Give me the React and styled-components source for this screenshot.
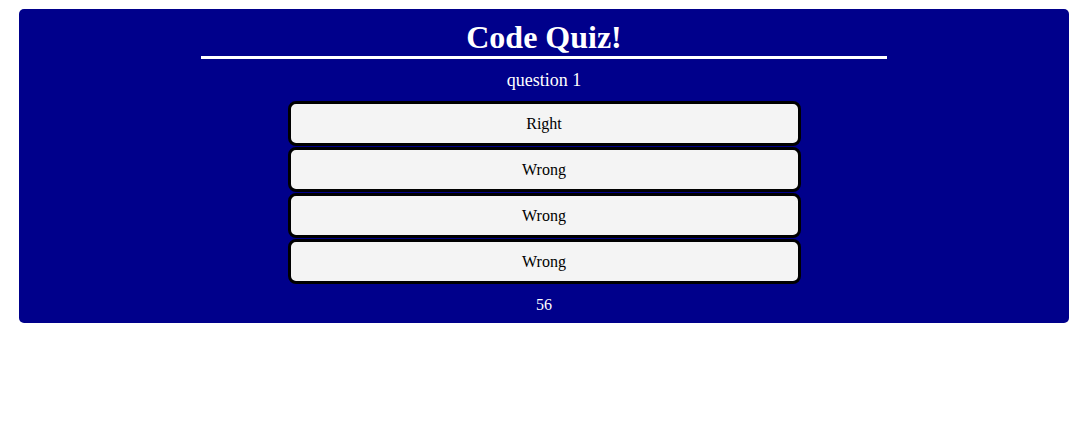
import styled, { createGlobalStyle } from "styled-components";

const GlobalStyle = createGlobalStyle`
  body {
    margin: 0;
    background: #fff;
    font-family: "Liberation Serif", "Times New Roman", serif;
  }
`;

const Card = styled.main`
  margin: 9px 22px 0 19px;
  padding: 10px 0 9px;
  background-color: #00008b;
  border-radius: 5px;
  display: flex;
  flex-direction: column;
  align-items: center;
  color: #fff;
`;

const Title = styled.h1`
  width: 686px;
  margin: 0;
  font-size: 32px;
  font-weight: bold;
  text-align: center;
  border-bottom: 3px solid #fff;
`;

const Question = styled.p`
  margin: 11px 0 10px;
  font-size: 18px;
`;

const Answers = styled.div`
  display: flex;
  flex-direction: column;
  gap: 1px;
`;

const Answer = styled.button`
  width: 513px;
  height: 45px;
  box-sizing: border-box;
  background-color: #f4f4f4;
  color: #000;
  border: 3px solid #000;
  border-radius: 8px;
  font-family: "Liberation Serif", "Times New Roman", serif;
  font-size: 16px;
  cursor: pointer;
`;

const Timer = styled.div`
  margin-top: 12px;
  font-size: 16px;
`;

const answers = ["Right", "Wrong", "Wrong", "Wrong"];

const App = () => {
  return (
    <>
      <GlobalStyle />
      <Card>
        <Title>Code Quiz!</Title>
        <Question>question 1</Question>
        <Answers>
          {answers.map((a, i) => (
            <Answer key={i}>{a}</Answer>
          ))}
        </Answers>
        <Timer>56</Timer>
      </Card>
    </>
  );
};

export default App;
